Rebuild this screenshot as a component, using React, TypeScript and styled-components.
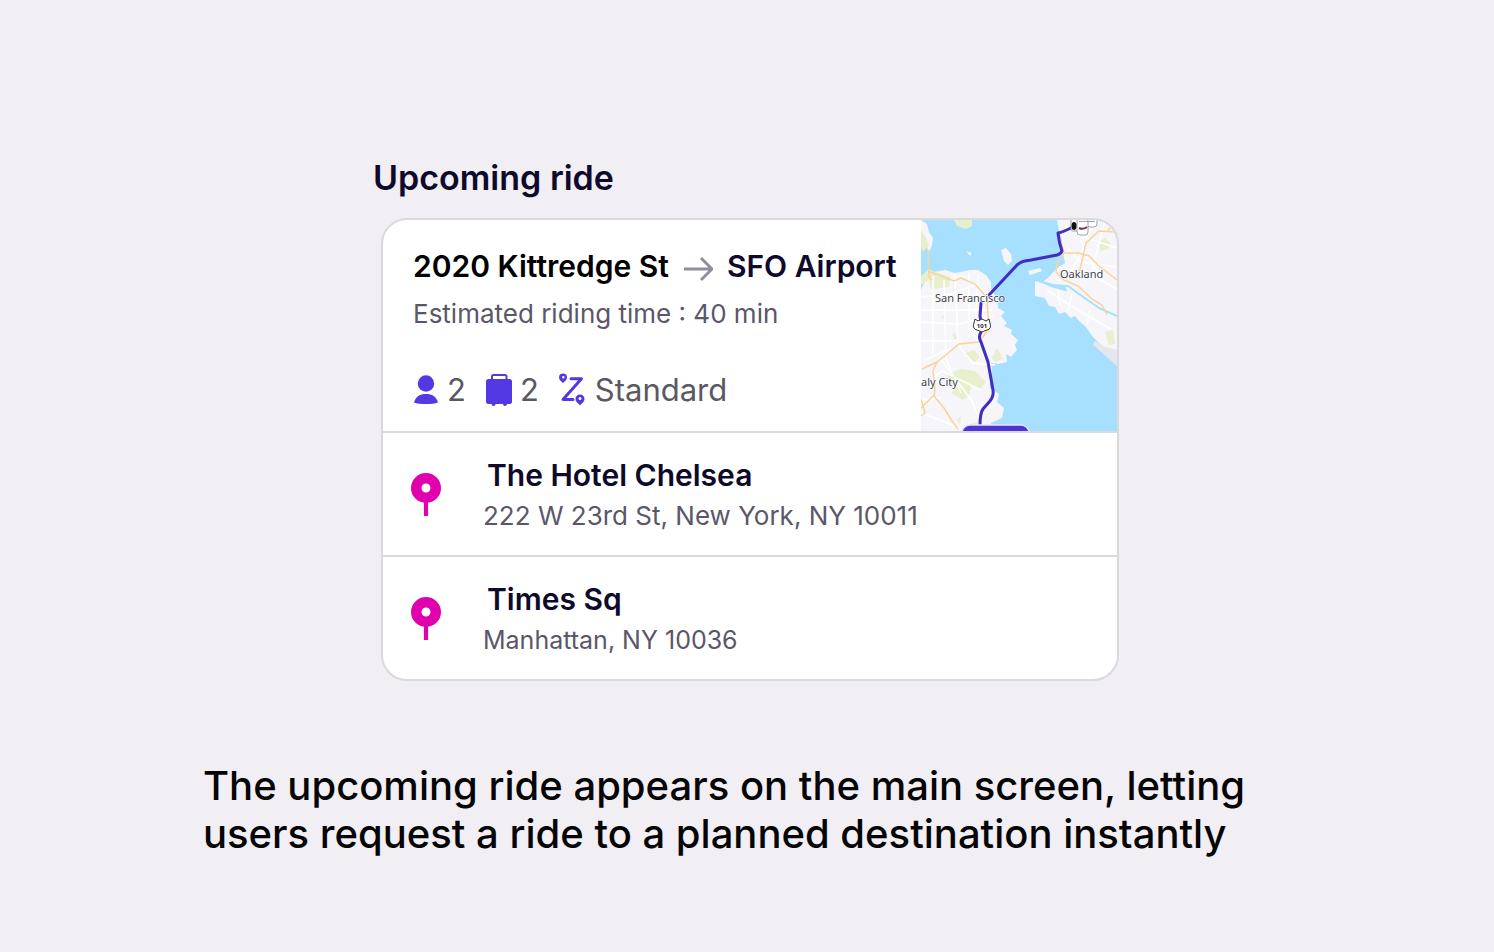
import React from "react";
import styled, { createGlobalStyle } from "styled-components";

const GlobalStyle = createGlobalStyle`
  *, *::before, *::after { box-sizing: border-box; }
  body {
    margin: 0;
    background: #f1eef4;
    font-family: Inter, "Liberation Sans", sans-serif;
    color: #0e0a2c;
  }
  h1, h2, h3, p, ul { margin: 0; padding: 0; }
`;

const Page = styled.main`
  max-width: 1120px;
  min-height: 100vh;
  margin: 0 auto;
  padding: 156px 16px 48px;
`;

const Ride = styled.section`
  max-width: 748px;
  margin: 0 auto;
`;

const Title = styled.h1`
  font-size: 34px;
  line-height: 44px;
  font-weight: 600;
`;

const Card = styled.article`
  margin: 18px 2px 0 8px;
  background: #fff;
  border: 2px solid #dadade;
  border-radius: 26px;
  overflow: hidden;
`;

const Summary = styled.div`
  display: flex;
  justify-content: space-between;
`;

const Details = styled.div`
  flex: 1;
  padding: 26px 0 20px 30px;
`;

const Route = styled.h2`
  display: flex;
  align-items: center;
  gap: 14px;
  font-size: 30px;
  line-height: 40px;
  font-weight: 600;
  white-space: nowrap;
`;

const Origin = styled.span`
  color: #000;
`;

const Muted = styled.p<{ $small?: boolean }>`
  font-size: ${(p) => (p.$small ? 25 : 26)}px;
  line-height: 40px;
  color: #5a5769;
`;

const Estimate = styled(Muted)`
  margin-top: 8px;
`;

const Facts = styled.ul`
  display: flex;
  align-items: center;
  gap: 20px;
  margin-top: 36px;
  list-style: none;
`;

const Fact = styled.li`
  display: flex;
  align-items: center;
  gap: 8px;
  font-size: 31px;
  line-height: 40px;
  color: #5a5862;
`;

const MapFrame = styled.div`
  flex: 0 0 196px;
  display: flex;

  svg {
    display: block;
    width: 100%;
    height: 100%;
  }
`;

const Stop = styled.div`
  display: flex;
  align-items: center;
  gap: 42px;
  padding: 21px 28px 19px;
  border-top: 2px solid #dadade;
`;

const StopName = styled.h3`
  padding-left: 4px;
  font-size: 30px;
  line-height: 42px;
  font-weight: 600;
`;

const Caption = styled.p`
  margin-top: 81px;
  font-size: 40px;
  line-height: 48px;
  font-weight: 500;
  color: #050505;
`;

const ArrowIcon = () => (
  <svg width="30" height="32" viewBox="0 0 30 32" fill="none" stroke="#908d9c" strokeWidth="3" aria-hidden="true">
    <path d="M1 19H29M18 8L29 19L18 30" />
  </svg>
);

const PersonIcon = () => (
  <svg width="26" height="32" viewBox="0 0 26 32" fill="#5239e3" aria-hidden="true">
    <circle cx="13" cy="9.500" r="8.200" />
    <path d="M1 28.500C2.500 22.500 7 20 13 20S23.500 22.500 25 28.500C22 29.800 18 30 13 30S4 29.800 1 28.500Z" />
  </svg>
);

const LuggageIcon = () => (
  <svg width="26" height="34" viewBox="0 0 26 34" fill="#5239e3" aria-hidden="true">
    <path d="M6 7V3.500Q6 2 7.500 2H19Q20.500 2 20.500 3.500V7" fill="none" stroke="#5239e3" strokeWidth="2" />
    <rect x="0" y="6" width="26" height="25" rx="2.500" />
    <circle cx="7.500" cy="31" r="2" />
    <circle cx="19" cy="31" r="2" />
  </svg>
);

const RouteIcon = () => (
  <svg width="28" height="34" viewBox="0 0 28 34" aria-hidden="true">
    <path d="M12 5.700H22.500L4 26.500H14" fill="none" stroke="#5239e3" strokeWidth="3" strokeLinecap="round" strokeLinejoin="round" />
    <path
      fill="#5239e3"
      fillRule="evenodd"
      d="M4 0.500A4 4 0 0 1 8 4.500C8 7 5.500 8.500 4 10C2.500 8.500 0 7 0 4.500A4 4 0 0 1 4 0.500ZM4.300 3A1.200 1.200 0 1 0 4.300 5.400A1.200 1.200 0 1 0 4.300 3ZM21 21.500A4.500 4.500 0 0 1 25.500 26C25.500 29 22.500 30.500 21 32.500C19.500 30.500 16.500 29 16.500 26A4.500 4.500 0 0 1 21 21.500ZM21 24A1.500 1.500 0 1 0 21 27A1.500 1.500 0 1 0 21 24Z"
    />
  </svg>
);

const PinIcon = () => (
  <svg width="30" height="44" viewBox="0 0 30 44" aria-hidden="true">
    <path d="M15 28V43" stroke="#e100ad" strokeWidth="4.200" />
    <circle cx="15" cy="15" r="9.750" fill="none" stroke="#e100ad" strokeWidth="10.500" />
  </svg>
);

const RideMap = () => (
  <svg viewBox="0 0 196 211" preserveAspectRatio="xMidYMid slice" role="img" aria-label="Ride from Berkeley to SFO">
    <rect width="196" height="211" fill="#a6e0fe" />
    <g fill="#f6f5f9">
      <path d="M0 0L6 4L8 12L12 18L11 26L7 34L6 25L0 22Z" />
      <path d="M0 70L4 60L7 49L13 52L24 50L34 53L49 50L57 50L65 55L70 62L70 69L76 78L77 88L84 92L80 96L86 103L83 106L91 110L90 114L97 120L94 125L96 130L90 137L85 134L86 142L78 144L70 143L71 150L69 160L69 168L78 174L76 182L83 188L81 198L70 203L69 211H0Z" />
      <path d="M136 0L138 11L141 20L142 33L144 43L136 48L128 57L120 63L114 62L128 64L144 66L148 76L164 87L180 96L190 106H196V0Z" />
      <path d="M114 60L130 67L148 72L156 75L170 88L184 96L196 102V121L188 118L176 114L166 108L158 101L154 96L150 98L144 92L138 94L134 87L128 86L124 78L114 76Z" />
      <path d="M80 30L85 28L90 34L91 41L87 45L83 41Z" />
      <path d="M45 31L51 33L49 36ZM107 51L119 48L121 51L109 55Z" />
      <path d="M165 107L169 105L188 106L196 108V130L184 129L172 117Z" />
    </g>
    <path d="M172 125L196 146V130L184 127L174 121Z" fill="#e4e7ed" />
    <path d="M114 60L132 65L147 66L158 74L178 88L196 96" fill="none" stroke="#a6e0fe" strokeWidth="2" />
    <g fill="#e7efcd">
      <path d="M33 0H51V6L45 9L36 6ZM0 10L5 18L8 25L2 32L0 27ZM7 50L18 53L29 57L28 67L10 69L8 60L0 65V56Z" />
      <path d="M45 133L53 130L59 137L54 142L46 138ZM27 154L40 149L54 151L65 162L59 169L50 166L48 176L42 180L30 173L36 166L26 161ZM32 112L37 118L33 120ZM76 128L82 139L74 142L71 138ZM20 97L24 95L25 100ZM36 200L40 196L39 204ZM184 112L192 110L194 124L188 125Z" />
      <path d="M177 22L184 18L190 24L187 29L180 31ZM160 0H170L175 7ZM50 204L58 201L58 208Z" />
    </g>
    <g fill="none" stroke="#fff" strokeWidth="1.500">
      <path d="M0 77L30 74L56 64M0 90H71M0 102L38 104L72 96M12 56V134M23 60L25 139L40 173M34 54L37 125L52 143L74 145M0 121H42M48 53V108L61 126M0 168L21 151L60 170M18 137L51 181L62 207M0 193L37 207M0 180L20 178M57 55L54 113M4 140L30 128" />
      <path d="M144 6L163 17L196 28M146 27L160 42L196 47M152 0L166 36L184 63M139 49L172 56L196 69M171 5L159 36L150 51M184 0L171 50M126 70L158 91L190 109M137 70L139 85M151 74L147 90M169 90L166 104" />
    </g>
    <g fill="none" stroke="#f9d39a" strokeWidth="1.500">
      <path d="M7 29L8 57L11 60M7 51L33 61L40 58L54 64L66 78L68 109L58 122L38 124L26 134L16 142L12 151L14 170L13 176L23 188L31 201L37 209M16 142L1 149M14 174L0 188M0 179L4 193L0 196" />
      <path d="M138 14L143 33L136 43L135 52L143 60L157 66L171 79L181 85L186 95M143 33L158 33L168 36L178 46L196 60M196 12L178 11L165 23L161 41L158 53" />
      <path d="M196 3L186 11" />
    </g>
    <g fill="none" stroke="#3f2dc6" strokeWidth="3" strokeLinejoin="round" strokeLinecap="round">
      <path d="M150 8Q142 12 137 13Q138 23 141 31Q140 34 136 35L110 40Q100 41 96 45L68 75" />
      <path d="M60 83L59 96L60 102M60 112Q57 117 60 122L67 142L72 170Q73 176 69 181L62 189Q59 193 59 206" />
    </g>
    <g fontFamily="Noto Sans, sans-serif" fontSize="11" fill="#3d424e" stroke="#fff" strokeWidth="1" paintOrder="stroke">
      <text x="14" y="82">San Francisco</text>
      <text x="139" y="58">Oakland</text>
      <text x="0" y="166">aly City</text>
    </g>
    <path d="M54 99L57 101L61 99L65 101L68 99L69 103Q71 109 66 110L61 112L56 110Q51 109 53 103Z" fill="#fff" stroke="#333" strokeWidth="1" />
    <text x="61" y="108" textAnchor="middle" fontFamily="Noto Sans, sans-serif" fontSize="6" fontWeight="700" fill="#222">101</text>
    <g fill="#fff" stroke="#8b8b91" strokeWidth="0.800">
      <rect x="150" y="-4" width="8" height="15" rx="2" />
      <rect x="166" y="-6" width="10" height="13" rx="3" />
      <rect x="156" y="-2" width="11" height="17" rx="3" />
      <path d="M158 1.500H174" />
    </g>
    <ellipse cx="153" cy="6" rx="2.500" ry="4" fill="#111" />
    <path d="M158 8Q162 10 166 7" fill="none" stroke="#713163" strokeWidth="2" />
    <rect x="41" y="205" width="67" height="20" rx="8" fill="#4c35d6" stroke="#e9e6f6" strokeWidth="1.500" />
  </svg>
);

const stops = [
  { name: "The Hotel Chelsea", address: "222 W 23rd St, New York, NY 10011", small: false },
  { name: "Times Sq", address: "Manhattan, NY 10036", small: true },
];

export default function App() {
  return (
    <>
      <GlobalStyle />
      <Page>
        <Ride>
          <Title>Upcoming ride</Title>
          <Card>
            <Summary>
              <Details>
                <Route>
                  <Origin>2020 Kittredge St</Origin>
                  <ArrowIcon />
                  <span>SFO Airport</span>
                </Route>
                <Estimate>Estimated riding time : 40 min</Estimate>
                <Facts>
                  <Fact><PersonIcon />2</Fact>
                  <Fact><LuggageIcon />2</Fact>
                  <Fact><RouteIcon />Standard</Fact>
                </Facts>
              </Details>
              <MapFrame><RideMap /></MapFrame>
            </Summary>
            {stops.map((stop) => (
              <Stop key={stop.name}>
                <PinIcon />
                <div>
                  <StopName>{stop.name}</StopName>
                  <Muted $small={stop.small}>{stop.address}</Muted>
                </div>
              </Stop>
            ))}
          </Card>
        </Ride>
        <Caption>The upcoming ride appears on the main screen, letting users request a ride to a planned destination instantly</Caption>
      </Page>
    </>
  );
}
